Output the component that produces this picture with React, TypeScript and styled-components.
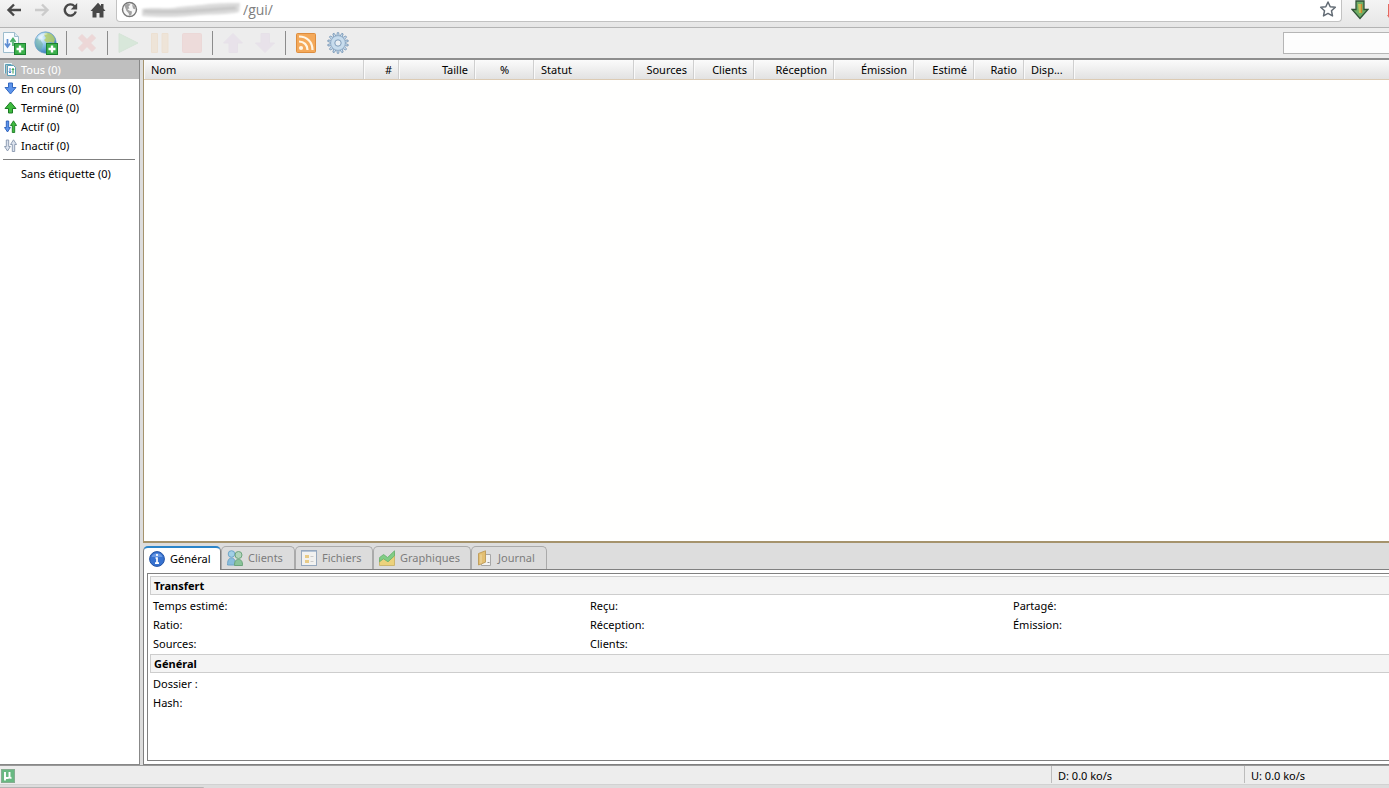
import React from 'react';
import styled, { createGlobalStyle } from 'styled-components';

const GlobalStyle = createGlobalStyle`
  * { box-sizing: border-box; }
  body {
    margin: 0;
    overflow: hidden;
    background: #dddddd;
    color: #000;
    font: 11px/18px "Noto Sans", "Open Sans", sans-serif;
  }
  button, input { font: inherit; color: inherit; }
`;

const Page = styled.div`
  display: flex;
  flex-direction: column;
  height: 100vh;
`;

/* Browser chrome */
const BrowserBar = styled.header`
  display: flex;
  flex: none;
  height: 28px;
  padding-bottom: 5px;
  background: linear-gradient(#f4f4f4, #e6e6e6);
  border-bottom: 1px solid #b4b4b4;
`;

const NavButton = styled.button`
  display: flex;
  width: 28px;
  height: 20px;
  padding: 0;
  border: 0;
  background: none;
  align-items: center;
  justify-content: center;
`;

const Navigation = styled.nav`
  display: flex;
  width: 116px;
`;

const AddressBox = styled.div`
  display: flex;
  flex: 1;
  padding: 0 4px;
  background: #fff;
  border: 1px solid #c2c2c2;
  border-top: 0;
  border-radius: 0 0 4px 4px;
`;

const AddressInput = styled.input`
  flex: 1;
  min-width: 0;
  height: 20px;
  padding: 0;
  border: 0;
  outline: 0;
  background: none;
  color: #808080;
  font-family: "Open Sans", sans-serif;
  font-size: 14px;
  line-height: 20px;
`;

const Extensions = styled.div`
  display: flex;
  width: 47px;
  overflow: hidden;
  padding-left: 4px;
`;

/* Application toolbar */
const Toolbar = styled.div`
  display: flex;
  flex: none;
  height: 32px;
  align-items: center;
  background: #ededed;
  border-bottom: 2px solid #8e8e8e;
`;

const Tools = styled.div`
  display: flex;
  flex: 1;
  align-items: center;
  margin-left: -2px;
`;

const ToolButton = styled.button`
  display: flex;
  width: 32px;
  height: 28px;
  padding: 0;
  border: 0;
  background: none;
  align-items: center;
  justify-content: center;
  &:disabled { opacity: 0.15; }
`;

const ToolSeparator = styled.span`
  width: 1px;
  height: 24px;
  margin: 0 4px;
  background: #8c8c8c;
`;

const SearchInput = styled.input`
  width: 106px;
  height: 22px;
  padding: 0 4px;
  border: 1px solid #b5b5b5;
  border-right: 0;
  border-radius: 0;
  background: #fdfdfd;
`;

/* Main area */
const Workspace = styled.div`
  display: flex;
  flex: 1;
  min-height: 0;
  gap: 3px;
`;

const Sidebar = styled.aside`
  flex: none;
  width: 140px;
  background: #fff;
  border-right: 1px solid #888;
  border-bottom: 1px solid #888;
`;

const Category = styled.button<{ $active?: boolean }>`
  display: flex;
  width: 100%;
  height: 19px;
  padding: 0 0 0 4px;
  gap: 4px;
  border: 0;
  align-items: center;
  text-align: left;
  white-space: nowrap;
  background: ${p => (p.$active ? '#bfbfbf' : 'none')};
  color: ${p => (p.$active ? '#fff' : '#000')};
`;

const IconSlot = styled.span`
  display: flex;
  width: 13px;
  height: 13px;
`;

const Rule = styled.hr`
  height: 1px;
  margin: 4px 4px 4px 3px;
  border: 0;
  background: #808080;
`;

const Content = styled.main`
  display: flex;
  flex: 1;
  flex-direction: column;
  min-width: 0;
`;

const Listing = styled.section`
  flex: 1;
  min-height: 0;
  background: #fffffe;
  border-left: 1px solid #a5936c;
  border-bottom: 2px solid #a5936c;
`;

const TorrentTable = styled.table`
  width: 100%;
  table-layout: fixed;
  border-collapse: separate;
  border-spacing: 0;
`;

const HeadCell = styled.th<{ $width?: number; $align?: string }>`
  width: ${p => (p.$width ? `${p.$width}px` : 'auto')};
  height: 20px;
  padding: 0 6px 0 7px;
  border-right: ${p => (p.$width ? '1px solid #cfcfcf' : '0')};
  border-bottom: 1px solid #dccbb4;
  background: linear-gradient(#fbfbfb, #e2e2e2);
  box-shadow: inset 1px 0 #fafafa;
  font-weight: 400;
  line-height: 18px;
  text-align: ${p => p.$align ?? 'right'};
  white-space: nowrap;
`;

const TabStrip = styled.div`
  display: flex;
  flex: none;
  height: 27px;
  align-items: flex-end;
  border-bottom: 1px solid #808080;
`;

const Tab = styled.button<{ $width: number; $active?: boolean }>`
  display: flex;
  flex: none;
  width: ${p => p.$width}px;
  height: ${p => (p.$active ? 24 : 23)}px;
  margin-bottom: ${p => (p.$active ? -1 : 0)}px;
  padding: 0 0 ${p => (p.$active ? 1 : 0)}px 5px;
  gap: 5px;
  align-items: center;
  border: 1px solid ${p => (p.$active ? '#808080' : '#aaa')};
  border-top: ${p => (p.$active ? '2px solid #2b85c9' : '1px solid #aaa')};
  border-bottom: 0;
  border-radius: 5px 5px 0 0;
  background: ${p => (p.$active ? '#fff' : '#dcdcdc')};
  color: ${p => (p.$active ? '#000' : '#7c7c7c')};
  line-height: 18px;
  white-space: nowrap;
  svg { flex: none; opacity: ${p => (p.$active ? 1 : 0.75)}; }
`;

const DetailFrame = styled.section`
  display: flex;
  flex: none;
  height: 195px;
  padding: 3px 0 3px 3px;
  background: #fff;
  border-left: 1px solid #808080;
  border-bottom: 1px solid #808080;
`;

const DetailPanel = styled.div`
  flex: 1;
  padding: 2px 0 0 2px;
  border: 1px solid #808080;
  border-right: 0;
`;

const SectionTitle = styled.h2`
  height: 19px;
  margin: 0;
  padding: 0 3px;
  border: 1px solid #cdcdcd;
  border-right: 0;
  background: #f4f4f4;
  font-size: 11px;
  font-weight: 700;
  line-height: 18px;
`;

const DetailGrid = styled.dl`
  display: grid;
  grid-template-columns: 437fr 423fr 376fr;
  grid-auto-rows: 19px;
  margin: 0;
  padding: 1px 0 1px 3px;
  line-height: 20px;
`;

const Detail = styled.div<{ $wide?: boolean }>`
  display: flex;
  grid-column: ${p => (p.$wide ? '1 / -1' : 'auto')};
  dd { margin: 0; }
`;

const StatusBar = styled.footer`
  display: flex;
  flex: none;
  height: 19px;
  border-top: 1px solid #999;
  background: #ededed;
  line-height: 20px;
`;

const StatusMark = styled.div`
  flex: 1;
  padding: 3px 1px 0;
  svg { display: block; }
`;

const Speed = styled.div<{ $width: number }>`
  width: ${p => p.$width}px;
  height: 17px;
  padding-left: 6px;
  border-left: 1px solid #bcbcbc;
`;

const WindowEdge = styled.div`
  display: flex;
  flex: none;
  height: 4px;
  align-items: flex-end;
  border-top: 1px solid #d2d2d2;
`;

const LinkBubble = styled.span`
  width: 204px;
  height: 1px;
  border-radius: 0 1px 0 0;
  background: #b4b4b4;
`;

/* Drawings */
const DOWN = 'M4.5 1h4v4.500h3.500L6.500 12 1 5.500h3.500z';
const UP = 'M4.500 12h4V7.500H12L6.500 1 1 7.500h3.500z';

const Arrow = ({ up, fill, stroke }: { up?: boolean; fill: string; stroke: string }) => (
  <svg width="13" height="13" viewBox="0 0 13 13">
    <path d={up ? UP : DOWN} fill={fill} stroke={stroke} strokeLinejoin="round" />
  </svg>
);

const PairArrows = ({ muted }: { muted?: boolean }) => (
  <svg width="13" height="13" viewBox="0 0 13 13" strokeWidth=".9" strokeLinejoin="round">
    <path d="M2.300 1h2.400v6.500h1.700L3.500 12 .5 7.500h1.800z" fill={muted ? '#dce3ee' : '#5c94ec'} stroke={muted ? '#8795ad' : '#275bb8'} />
    <path d="M8.300 12.500h2.400V5.500h1.900L9.500 .8 6.500 5.500h1.800z" fill={muted ? '#dce3ee' : '#3fbb3f'} stroke={muted ? '#8795ad' : '#1b7a24'} />
  </svg>
);

const AllIcon = () => (
  <svg width="13" height="13" viewBox="0 0 13 13" fill="#fff" stroke="#5c9fb5">
    <path d="M1 10.500v-9.500h7" stroke="#e8f4f8" strokeWidth="2" fill="none" />
    <path d="M1.500 10.500v-9h6" fill="none" />
    <path d="M3.500 2.500h6l2 2v8h-8z" />
    <path d="M6 5v5M4.800 8.500 6 10l1-1.500" stroke="#3775c8" fill="none" />
    <path d="M9 10.500V5.500M7.900 7 9 5.500l1 1.500" stroke="#2e9b48" fill="none" />
  </svg>
);

const PlusBadge = () => (
  <g>
    <rect x="12.500" y="12.500" width="11" height="11" fill="#3bb04b" stroke="#1d8132" />
    <path d="M18 14.500v7M14.500 18h7" stroke="#fff" strokeWidth="2.400" />
  </g>
);

const AddFileIcon = () => (
  <svg width="24" height="24" viewBox="0 0 24 24">
    <path d="M1.500 1.500h11l4 4v16h-15z" fill="#f8fcff" stroke="#9dbdcd" />
    <path d="M12.500 1.500v4h4" fill="#dbeaf1" stroke="#9dbdcd" />
    <path d="M5.500 8v8M3 12.500l2.500 3.500L8 12.500" fill="none" stroke="#5f8fd4" strokeWidth="1.700" />
    <path d="M11 15V8M8.500 11 11 7.500l2.500 3.500" fill="none" stroke="#4bb069" strokeWidth="1.700" />
    <PlusBadge />
  </svg>
);

const AddUrlIcon = () => (
  <svg width="24" height="24" viewBox="0 0 24 24">
    <defs>
      <radialGradient id="sea" cx=".32" cy=".3" r=".8">
        <stop offset="0" stopColor="#e6f6ff" />
        <stop offset=".45" stopColor="#85bfe5" />
        <stop offset="1" stopColor="#2d70b2" />
      </radialGradient>
    </defs>
    <circle cx="11.500" cy="11.500" r="10.700" fill="url(#sea)" stroke="#6e9fc4" strokeWidth=".7" />
    <path d="M11 2c4-1 8 1 10 6l-1 4-4-1-3 1-3-3 2-2-2-3z" fill="#b9cf62" opacity=".8" />
    <path d="M2 8c2-1 4 0 5 2l2 3-1 4-2 3C3 18 0 13 2 8z" fill="#6fae9b" opacity=".55" />
    <path d="M4 6C7 2 11 1 14 3c-4 1-7 3-9 7z" fill="#fff" opacity=".45" />
    <PlusBadge />
  </svg>
);

const RemoveIcon = () => (
  <svg width="22" height="22" viewBox="0 0 22 22">
    <path d="m2.500 6 3.500-3.500 5 5 5-5L19.500 6l-5 5 5 5-3.500 3.500-5-5-5 5L2.500 16l5-5z" fill="#ef6262" stroke="#d95151" />
  </svg>
);

const PlayIcon = () => (
  <svg width="22" height="22" viewBox="0 0 22 22"><path d="M2 1.500 21 11 2 20.500z" fill="#69c874" stroke="#50ad5b" /></svg>
);

const PauseIcon = () => (
  <svg width="22" height="22" viewBox="0 0 22 22" fill="#f8b465" stroke="#eb9a42"><path d="M2.500 1.500h6v19h-6zM13 1.500h6v19h-6z" /></svg>
);

const StopIcon = () => (
  <svg width="22" height="22" viewBox="0 0 22 22"><rect x="1.500" y="1.500" width="19" height="19" rx="1" fill="#f27b72" stroke="#e06962" /></svg>
);

const QueueIcon = ({ down }: { down?: boolean }) => (
  <svg width="22" height="22" viewBox="0 0 22 22">
    <path d={down ? 'M7 1.500h8.500V11H20.500L11 20.500 1.500 11H7z' : 'M7 20.500h8.500V11H20.500L11 1.500 1.500 11H7z'} fill="#cfabdc" stroke="#c2a0d0" />
  </svg>
);

const RssIcon = () => (
  <svg width="20" height="20" viewBox="0 0 20 20" fill="none">
    <rect x=".5" y=".5" width="19" height="19" rx="1" fill="#f4a95a" stroke="#dd8d3f" />
    <path d="M3 3.500c8 0 13.500 5.500 13.500 13.500M3 8.500c5 0 8.500 3.500 8.500 8.500" stroke="#fff6e6" strokeWidth="2.200" />
    <circle cx="5" cy="15" r="2.100" fill="#fff6e6" />
  </svg>
);

const GearIcon = () => (
  <svg width="22" height="22" viewBox="0 0 22 22">
    {Array.from({ length: 14 }, (_, i) => (
      <path key={i} d="M9.800 4 10.300.6h1.400l.5 3.400z" fill="#cbdff0" stroke="#7594b4" strokeWidth=".8" transform={`rotate(${(i * 360) / 14} 11 11)`} />
    ))}
    <circle cx="11" cy="11" r="7.300" fill="#c7dced" stroke="#8fabc5" strokeWidth=".7" />
    <circle cx="11" cy="11" r="3.200" fill="#e9eff4" stroke="#7f9dbb" />
  </svg>
);

const BackIcon = ({ forward }: { forward?: boolean }) => (
  <svg width="16" height="16" viewBox="0 0 16 16" fill="none" stroke={forward ? '#cbcbcb' : '#484848'} strokeWidth="2.400">
    <path d={forward ? 'M1 8h12M8 2.500 13.500 8 8 13.500' : 'M15 8H3M8 2.500 2.500 8 8 13.500'} />
  </svg>
);

const ReloadIcon = () => (
  <svg width="16" height="16" viewBox="0 0 16 16">
    <path d="M13.800 9.500A5.600 5.600 0 1 1 12.500 4.200" fill="none" stroke="#484848" strokeWidth="2.400" />
    <path d="M15.200 1v6.500H8.700z" fill="#484848" />
  </svg>
);

const HomeIcon = () => (
  <svg width="16" height="16" viewBox="0 0 16 16" fill="#484848">
    <path d="M8 .8 11 4V2h2.500v4.500L15.500 9H13.500v6.500H9.500V11h-3v4.500H2.500V9H.5z" />
  </svg>
);

const SiteIcon = () => (
  <svg width="17" height="19" viewBox="0 0 17 19">
    <circle cx="8.500" cy="9.500" r="7" fill="#f7f7f7" stroke="#777" strokeWidth="1.400" />
    <path d="M3.500 5.500 6.500 3.500l3 1-2 2 1 2-2 .5 1.500 1.500 3 1-.5 3-2 1.500-1-3-2-2-1.500-4zM11 4l3 2.500.5 3-2.500-1z" fill="#a3a3a3" />
  </svg>
);

const HiddenHost = () => (
  <svg width="105" height="20" viewBox="0 0 105 20">
    <defs><filter id="smear"><feGaussianBlur stdDeviation="1.200" /></filter></defs>
    <g filter="url(#smear)">
      <path d="M4 9c12-2 18 0 31-1 16-3 26-2 36-4 10-1 22-1 31-1l-1 9c-13 3-25 2-38 3-18 2-40 3-59 1z" fill="#dadada" />
      <path d="M6 11c25 3 55-1 92-3" stroke="#c6c6c6" strokeWidth="3" fill="none" />
    </g>
  </svg>
);

const StarIcon = () => (
  <svg width="18" height="18" viewBox="0 0 18 18">
    <path d="m9 2 2.200 4.700 5.100.6-3.800 3.500 1 5.100L9 13.400l-4.500 2.500 1-5.100-3.800-3.500 5.100-.6z" fill="#fff" stroke="#626b74" strokeWidth="1.500" strokeLinejoin="round" />
  </svg>
);

const DownloadExtension = () => (
  <svg width="18" height="20" viewBox="0 0 18 20">
    <path d="M5 1h8v8.500h4L9 18.500 1 9.500h4z" fill="#6fae66" stroke="#2f5236" strokeWidth="1.300" />
    <path d="M7 4h4v9H8" fill="#c6c057" />
    <path d="M10.500 4v9" stroke="#d0862f" strokeWidth="1.300" />
  </svg>
);

const InfoIcon = () => (
  <svg width="16" height="16" viewBox="0 0 16 16">
    <circle cx="8" cy="8" r="7.400" fill="#3772d0" stroke="#2453a4" />
    <path d="M2.500 6c1.500-5 9.500-5 11 0z" fill="#7fa9ec" opacity=".7" />
    <path d="M8 3v2M6.500 7H8v5M6 12.200h4" stroke="#fff" strokeWidth="1.700" fill="none" />
  </svg>
);

const PeersIcon = () => (
  <svg width="16" height="16" viewBox="0 0 16 16">
    <path d="M.5 15c0-4 1-7 4-7s4 3 4 7z" fill="#6db3dc" stroke="#4b92c0" />
    <circle cx="4.500" cy="4" r="3.300" fill="#8ecbe9" stroke="#4b92c0" />
    <path d="M7.500 15.500c0-4 1-6 4-6s4 2 4 6z" fill="#6fbd84" stroke="#46925b" />
    <circle cx="11.500" cy="5" r="3.500" fill="#a3d2b0" stroke="#46925b" />
  </svg>
);

const FilesIcon = () => (
  <svg width="16" height="16" viewBox="0 0 16 16">
    <rect x=".5" y=".5" width="15" height="15" fill="#fafaf7" stroke="#8199b4" />
    <path d="M1 1.500h14" stroke="#a9bdd4" />
    <path d="M4 5h4v3H4zM4 10h4v3H4z" fill="#ecc66b" />
    <path d="M9.500 6.500h3M9.500 11.500h3" stroke="#c6c6c6" />
  </svg>
);

const GraphIcon = () => (
  <svg width="16" height="16" viewBox="0 0 16 16">
    <path d="m.5 10 4-3 4 3 7-7v12.500H.5z" fill="#f2cf5c" stroke="#c9aa4a" />
    <path d="m.6 7.500 4-3 4 3L15.500.8v5l-6.500 6-4.500-3-4 3z" fill="#63c869" stroke="#3b9f48" strokeWidth=".8" />
  </svg>
);

const LogIcon = () => (
  <svg width="16" height="16" viewBox="0 0 16 16">
    <path d="M4.500 4.500h9v11h-9z" fill="#fafafa" stroke="#969696" />
    <path d="M1.500 3.500 8.500.8v11.400L1.500 15z" fill="#e6b64f" stroke="#b98b34" />
    <path d="M4 4.500v9" stroke="#f6dc9b" />
    <path d="M10.500 12.500h2" stroke="#777" />
  </svg>
);

const MuIcon = () => (
  <svg width="14" height="14" viewBox="0 0 14 14">
    <rect x=".5" y=".5" width="13" height="13" fill="#68b982" stroke="#86ad91" />
    <path d="M4 3v8.500M4 3v4.500c0 2 4.500 2 4.500 0V3v4.500c0 1.200.8 1.500 2 1.300" fill="none" stroke="#fff" strokeWidth="1.900" />
  </svg>
);

const categories = [
  { label: 'Tous (0)', icon: <AllIcon /> },
  { label: 'En cours (0)', icon: <Arrow fill="#5c94ec" stroke="#3569bf" /> },
  { label: 'Terminé (0)', icon: <Arrow up fill="#3fbb3f" stroke="#1b7a24" /> },
  { label: 'Actif (0)', icon: <PairArrows /> },
  { label: 'Inactif (0)', icon: <PairArrows muted /> },
];

const columns: [string, number, string?][] = [
  ['Nom', 220, 'left'], ['#', 35], ['Taille', 76], ['%', 59, 'center'], ['Statut', 100, 'left'],
  ['Sources', 60], ['Clients', 60], ['Réception', 80], ['Émission', 80], ['Estimé', 60],
  ['Ratio', 50], ['Disp...', 50, 'left'],
];

const tabs = [
  { label: 'Général', width: 78, icon: <InfoIcon /> },
  { label: 'Clients', width: 74, icon: <PeersIcon /> },
  { label: 'Fichiers', width: 78, icon: <FilesIcon /> },
  { label: 'Graphiques', width: 98, icon: <GraphIcon /> },
  { label: 'Journal', width: 76, icon: <LogIcon /> },
];

const transfer = ['Temps estimé:', 'Reçu:', 'Partagé:', 'Ratio:', 'Réception:', 'Émission:', 'Sources:', 'Clients:'];

export default function App() {
  return (
    <Page>
      <GlobalStyle />
      <BrowserBar>
        <Navigation>
          <NavButton aria-label="Précédent"><BackIcon /></NavButton>
          <NavButton aria-label="Suivant" disabled><BackIcon forward /></NavButton>
          <NavButton aria-label="Actualiser"><ReloadIcon /></NavButton>
          <NavButton aria-label="Accueil"><HomeIcon /></NavButton>
        </Navigation>
        <AddressBox>
          <SiteIcon />
          <HiddenHost />
          <AddressInput aria-label="Adresse" defaultValue="/gui/" />
          <StarIcon />
        </AddressBox>
        <Extensions>
          <NavButton aria-label="Téléchargements"><DownloadExtension /></NavButton>
          <svg width="15" height="20" viewBox="0 0 15 20"><path d="M14 4h1v14l-2-3h1z" fill="#e66a5f" /></svg>
        </Extensions>
      </BrowserBar>

      <Toolbar>
        <Tools>
          <ToolButton aria-label="Ajouter un torrent"><AddFileIcon /></ToolButton>
          <ToolButton aria-label="Ajouter une adresse"><AddUrlIcon /></ToolButton>
          <ToolSeparator />
          <ToolButton disabled aria-label="Supprimer"><RemoveIcon /></ToolButton>
          <ToolSeparator />
          <ToolButton disabled aria-label="Démarrer"><PlayIcon /></ToolButton>
          <ToolButton disabled aria-label="Pause"><PauseIcon /></ToolButton>
          <ToolButton disabled aria-label="Arrêter"><StopIcon /></ToolButton>
          <ToolSeparator />
          <ToolButton disabled aria-label="Monter"><QueueIcon /></ToolButton>
          <ToolButton disabled aria-label="Descendre"><QueueIcon down /></ToolButton>
          <ToolSeparator />
          <ToolButton aria-label="Flux RSS"><RssIcon /></ToolButton>
          <ToolButton aria-label="Préférences"><GearIcon /></ToolButton>
        </Tools>
        <SearchInput aria-label="Rechercher" />
      </Toolbar>

      <Workspace>
        <Sidebar>
          {categories.map((c, i) => (
            <Category key={c.label} $active={i === 0}><IconSlot>{c.icon}</IconSlot>{c.label}</Category>
          ))}
          <Rule />
          <Category><IconSlot />Sans étiquette (0)</Category>
        </Sidebar>
        <Content>
          <Listing>
            <TorrentTable>
              <thead>
                <tr>
                  {columns.map(([label, width, align]) => (
                    <HeadCell key={label} scope="col" $width={width} $align={align}>{label}</HeadCell>
                  ))}
                  <HeadCell as="td" />
                </tr>
              </thead>
            </TorrentTable>
          </Listing>
          <TabStrip role="tablist">
            {tabs.map((t, i) => (
              <Tab key={t.label} role="tab" aria-selected={i === 0} $width={t.width} $active={i === 0}>{t.icon}{t.label}</Tab>
            ))}
          </TabStrip>
          <DetailFrame>
            <DetailPanel>
              <SectionTitle>Transfert</SectionTitle>
              <DetailGrid>
                {transfer.map(label => <Detail key={label}><dt>{label}</dt><dd /></Detail>)}
              </DetailGrid>
              <SectionTitle>Général</SectionTitle>
              <DetailGrid>
                <Detail $wide><dt>Dossier :</dt><dd /></Detail>
                <Detail $wide><dt>Hash:</dt><dd /></Detail>
              </DetailGrid>
            </DetailPanel>
          </DetailFrame>
        </Content>
      </Workspace>

      <StatusBar>
        <StatusMark><MuIcon /></StatusMark>
        <Speed $width={193}>D: 0.0 ko/s</Speed>
        <Speed $width={145}>U: 0.0 ko/s</Speed>
      </StatusBar>
      <WindowEdge><LinkBubble /></WindowEdge>
    </Page>
  );
}
